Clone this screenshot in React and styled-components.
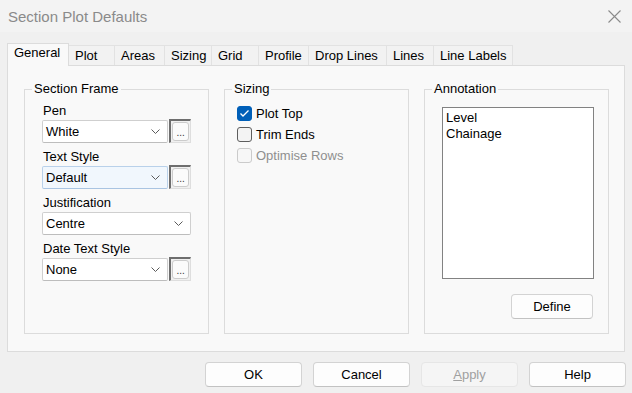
import React from "react";
import styled, { createGlobalStyle, css } from "styled-components";

const GlobalStyle = createGlobalStyle`
  html, body { margin: 0; padding: 0; background: #f0f0f0; }
  body {
    font-family: "Liberation Sans", Arial, sans-serif;
    font-size: 13px;
    color: #000;
  }
  * { box-sizing: border-box; }
`;

const Window = styled.div`
  width: 632px;
  height: 393px;
  display: flex;
  flex-direction: column;
  overflow: hidden;
  background: #f0f0f0;
`;

const TitleBar = styled.div`
  height: 32px;
  flex: none;
  display: flex;
  align-items: center;
  justify-content: space-between;
  padding: 0 11px 0 8px;
  background: #f3f3f3;
`;

const Title = styled.span`
  font-size: 15px;
  color: #8a8a8a;
`;

const Main = styled.div`
  padding: 11px 7px 0 7px;
  display: flex;
  flex-direction: column;
`;

const TabStrip = styled.div`
  display: flex;
  align-items: flex-end;
  height: 23px;
  margin-bottom: -1px;
  position: relative;
  z-index: 1;
`;

const Tab = styled.div`
  width: ${(p) => p.$w}px;
  height: 20px;
  margin-bottom: 1px;
  padding-left: 6px;
  line-height: 19px;
  white-space: nowrap;
  background: #f2f2f2;
  border-top: 1px solid #e2e2e2;
  border-right: 1px solid #e2e2e2;
  color: #000;
  ${(p) =>
    p.$active &&
    css`
      height: 23px;
      margin-bottom: 0;
      padding-top: 1px;
      line-height: 16px;
      background: #f9f9f9;
      border-left: 1px solid #dcdcdc;
      border-top-color: #dcdcdc;
      border-right-color: #dcdcdc;
    `}
`;

const Panel = styled.div`
  height: 287px;
  border: 1px solid #dcdcdc;
  background: #f9f9f9;
  padding: 15px 15px 17px 16px;
  display: grid;
  grid-template-columns: repeat(3, 185px);
  column-gap: 15px;
`;

const Group = styled.fieldset`
  margin: 0;
  padding: 0;
  min-width: 0;
  border: 1px solid #dcdcdc;
`;

const Legend = styled.legend`
  margin-left: 7px;
  padding: 0 2px;
  line-height: 16px;
  font-size: 13px;
`;

const FrameFields = styled.div`
  display: flex;
  flex-direction: column;
  gap: 6px;
  padding: 6px 17px 0 17px;
`;

const Field = styled.div`
  display: flex;
  flex-direction: column;
`;

const Label = styled.div`
  line-height: 16px;
  padding-left: 1px;
`;

const Row = styled.div`
  display: flex;
  align-items: center;
  height: 24px;
  gap: 1px;
`;

const Combo = styled.div`
  width: ${(p) => p.$w}px;
  height: 23px;
  display: flex;
  align-items: center;
  justify-content: space-between;
  padding: 0 7px 0 3px;
  background: ${(p) => (p.$hot ? "#f1f7fd" : "#ffffff")};
  border: 1px solid ${(p) => (p.$hot ? "#b9d1ea" : "#cfcfcf")};
  border-bottom-color: ${(p) => (p.$hot ? "#a9c4e2" : "#bdbdbd")};
  border-radius: 2px;
`;

const EllipsisFrame = styled.div`
  width: 22px;
  height: 24px;
  display: flex;
  border-left: 2px solid #6e6e6e;
  border-top: 2px solid #6e6e6e;
  border-right: 1px solid #dedede;
  border-bottom: 1px solid #dedede;
  background: #f0f0f0;
`;

const EllipsisInner = styled.div`
  flex: 1;
  margin: 1px;
  border: 1px solid #cccccc;
  border-radius: 3px;
  background: #fbfbfb;
  display: flex;
  align-items: flex-end;
  justify-content: center;
  font-size: 10px;
  line-height: 12px;
  color: #333;
  padding-bottom: 1px;
`;

const CheckList = styled.div`
  display: flex;
  flex-direction: column;
  padding: 6px 0 0 12px;
`;

const CheckRow = styled.label`
  height: 21px;
  display: flex;
  align-items: center;
  gap: 4px;
  color: ${(p) => (p.$disabled ? "#8f8f8f" : "#000")};
`;

const Box = styled.span`
  width: 15px;
  height: 15px;
  border-radius: 3px;
  display: flex;
  align-items: center;
  justify-content: center;
  ${(p) =>
    p.$state === "checked"
      ? css`
          background: #005fb8;
          border: 1px solid #005fb8;
        `
      : p.$state === "disabled"
      ? css`
          background: #f7f7f7;
          border: 1px solid #cbcbcb;
        `
      : css`
          background: #f3f3f3;
          border: 1px solid #5e5e5e;
        `}
`;

const AnnotationBody = styled.div`
  display: flex;
  flex-direction: column;
  padding: 10px 14px 0 17px;
`;

const ListBox = styled.div`
  height: 172px;
  border: 1px solid #828282;
  background: #ffffff;
  padding: 2px 3px;
`;

const ListItem = styled.div`
  line-height: 16px;
`;

const Button = styled.button`
  width: ${(p) => p.$w || 97}px;
  height: 25px;
  font-family: "Liberation Sans", Arial, sans-serif;
  font-size: 13px;
  color: ${(p) => (p.disabled ? "#a0a0a0" : "#000")};
  background: ${(p) => (p.disabled ? "#f5f5f5" : "#fdfdfd")};
  border: 1px solid ${(p) => (p.disabled ? "#e6e6e6" : "#d3d3d3")};
  border-bottom-color: ${(p) => (p.disabled ? "#e6e6e6" : "#c2c2c2")};
  border-radius: 4px;
  padding: 0;
  u { text-decoration: underline; }
`;

const DefineButton = styled(Button)`
  align-self: flex-end;
  margin-top: 15px;
  margin-right: 1px;
`;

const ButtonRow = styled.div`
  display: flex;
  justify-content: flex-end;
  gap: 11px;
  padding-top: 10px;
  margin-right: -1px;
`;

const Chevron = () => (
  <svg width="9" height="5" viewBox="0 0 9 5">
    <path d="M0.5 0.5 L4.5 4.5 L8.5 0.5" fill="none" stroke="#5a5a5a" strokeWidth="1" />
  </svg>
);

const CloseIcon = () => (
  <svg width="13" height="13" viewBox="0 0 13 13">
    <path d="M0.5 0.5 L12.5 12.5 M12.5 0.5 L0.5 12.5" stroke="#8a8a8a" strokeWidth="1.1" />
  </svg>
);

const CheckMark = () => (
  <svg width="11" height="9" viewBox="0 0 11 9">
    <path d="M1.5 4.5 L4 7 L9.5 1.5" fill="none" stroke="#fff" strokeWidth="1.3" />
  </svg>
);

const ComboField = ({ label, value, hot, ellipsis }) => (
  <Field>
    <Label>{label}</Label>
    <Row>
      <Combo $w={ellipsis ? 128 : 150} $hot={hot}>
        <span>{value}</span>
        <Chevron />
      </Combo>
      {ellipsis && (
        <EllipsisFrame>
          <EllipsisInner>...</EllipsisInner>
        </EllipsisFrame>
      )}
    </Row>
  </Field>
);

const Check = ({ label, state }) => (
  <CheckRow $disabled={state === "disabled"}>
    <Box $state={state}>{state === "checked" && <CheckMark />}</Box>
    {label}
  </CheckRow>
);

const tabs = [
  ["General", 62],
  ["Plot", 46],
  ["Areas", 50],
  ["Sizing", 47],
  ["Grid", 47],
  ["Profile", 50],
  ["Drop Lines", 78],
  ["Lines", 47],
  ["Line Labels", 79],
];

export default function App() {
  return (
    <>
      <GlobalStyle />
      <Window>
        <TitleBar>
          <Title>Section Plot Defaults</Title>
          <CloseIcon />
        </TitleBar>
        <Main>
          <TabStrip>
            {tabs.map(([t, w], i) => (
              <Tab key={t} $w={w} $active={i === 0}>
                {t}
              </Tab>
            ))}
          </TabStrip>
          <Panel>
            <Group>
              <Legend>Section Frame</Legend>
              <FrameFields>
                <ComboField label="Pen" value="White" ellipsis />
                <ComboField label="Text Style" value="Default" hot ellipsis />
                <ComboField label="Justification" value="Centre" />
                <ComboField label="Date Text Style" value="None" ellipsis />
              </FrameFields>
            </Group>
            <Group>
              <Legend>Sizing</Legend>
              <CheckList>
                <Check label="Plot Top" state="checked" />
                <Check label="Trim Ends" state="unchecked" />
                <Check label="Optimise Rows" state="disabled" />
              </CheckList>
            </Group>
            <Group>
              <Legend>Annotation</Legend>
              <AnnotationBody>
                <ListBox>
                  <ListItem>Level</ListItem>
                  <ListItem>Chainage</ListItem>
                </ListBox>
                <DefineButton $w={82}>Define</DefineButton>
              </AnnotationBody>
            </Group>
          </Panel>
          <ButtonRow>
            <Button>OK</Button>
            <Button>Cancel</Button>
            <Button disabled>
              <u>A</u>pply
            </Button>
            <Button>Help</Button>
          </ButtonRow>
        </Main>
      </Window>
    </>
  );
}
